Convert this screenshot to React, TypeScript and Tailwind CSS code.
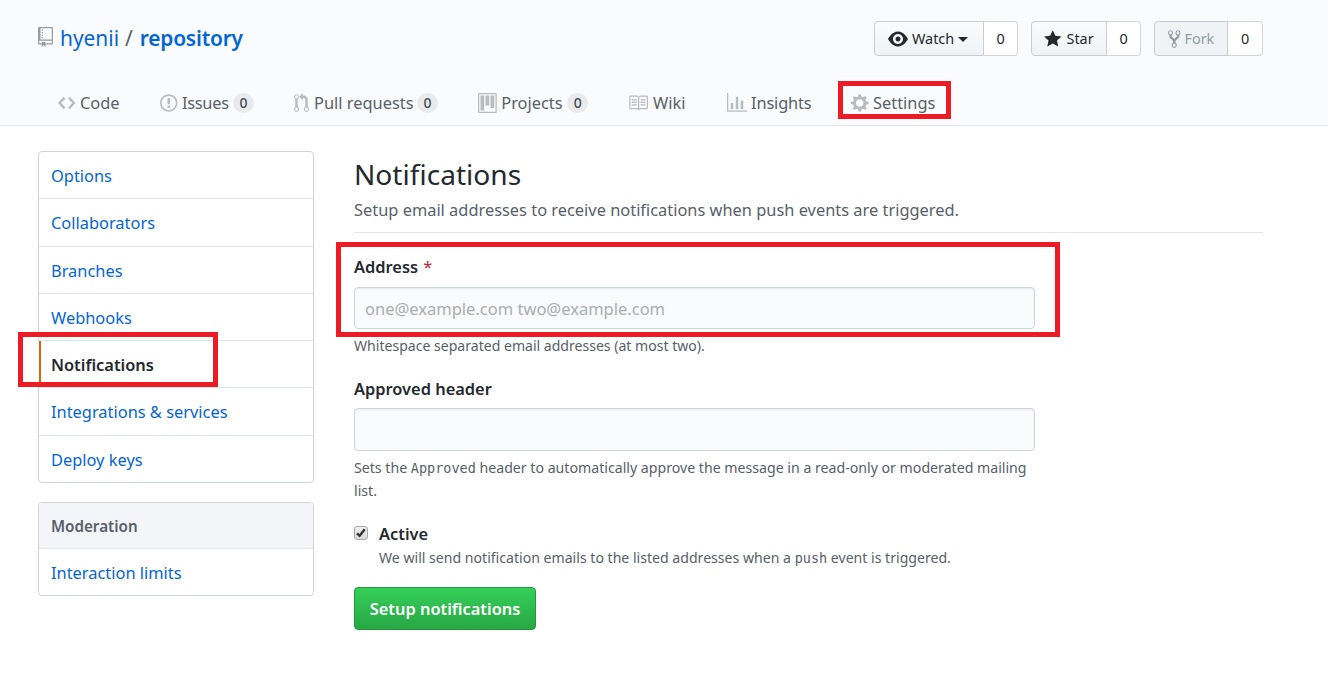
import type { ReactNode } from "react";

const paths = {
  repo: "M4 9H3V8h1v1zm0-3H3v1h1V6zm0-2H3v1h1V4zm0-2H3v1h1V2zm8-1v12c0 .55-.45 1-1 1H6v2l-1.5-1.5L3 16v-2H1c-.55 0-1-.45-1-1V1c0-.55.45-1 1-1h10c.55 0 1 .45 1 1zm-1 10H1v2h2v-1h3v1h5v-2zm0-10H2v9h9V1z",
  eye: "M8.06 2C3 2 0 8 0 8s3 6 8.06 6C13 14 16 8 16 8s-3-6-7.94-6zM8 12c-2.2 0-4-1.78-4-4 0-2.2 1.8-4 4-4 2.22 0 4 1.8 4 4 0 2.22-1.78 4-4 4zm2-4c0 1.11-.89 2-2 2-1.11 0-2-.89-2-2 0-1.11.89-2 2-2 1.11 0 2 .89 2 2z",
  star: "M14 6l-4.9-.64L7 1 4.9 5.36 0 6l3.6 3.26L2.67 14 7 11.67 11.33 14l-.93-4.74z",
  fork: "M8 1a1.993 1.993 0 0 0-1 3.72V6L5 8 3 6V4.72A1.993 1.993 0 0 0 2 1a1.993 1.993 0 0 0-1 3.72V6.5l3 3v1.78A1.993 1.993 0 0 0 5 15a1.993 1.993 0 0 0 1-3.72V9.5l3-3V4.72A1.993 1.993 0 0 0 8 1zM2 4.2C1.34 4.2.8 3.65.8 3c0-.65.55-1.2 1.2-1.2.65 0 1.2.55 1.2 1.2 0 .65-.55 1.2-1.2 1.2zm3 10c-.66 0-1.2-.55-1.2-1.2 0-.65.55-1.2 1.2-1.2.65 0 1.2.55 1.2 1.2 0 .65-.55 1.2-1.2 1.2zm3-10c-.66 0-1.2-.55-1.2-1.2 0-.65.55-1.2 1.2-1.2.65 0 1.2.55 1.2 1.2 0 .65-.55 1.2-1.2 1.2z",
  code: "M9.5 3L8 4.5 11.5 8 8 11.5 9.5 13 14 8 9.5 3zm-5 0L0 8l4.5 5L6 11.5 2.5 8 6 4.5 4.5 3z",
  issue: "M7 2.3c3.14 0 5.7 2.56 5.7 5.7s-2.56 5.7-5.7 5.7A5.71 5.71 0 0 1 1.3 8c0-3.14 2.56-5.7 5.7-5.7zM7 1C3.14 1 0 4.14 0 8s3.14 7 7 7 7-3.14 7-7-3.14-7-7-7zm1 3H6v5h2V4zm0 6H6v2h2v-2z",
  pull: "M11 11.28V5c-.03-.78-.34-1.47-.94-2.06C9.46 2.35 8.78 2.03 8 2H7V0L4 3l3 3V4h1c.27.02.48.11.69.31.21.2.3.42.31.69v6.28A1.993 1.993 0 0 0 10 15a1.993 1.993 0 0 0 1-3.72zm-1 2.92c-.66 0-1.2-.55-1.2-1.2 0-.65.55-1.2 1.2-1.2.65 0 1.2.55 1.2 1.2 0 .65-.55 1.2-1.2 1.2zM4 3c0-1.11-.89-2-2-2a1.993 1.993 0 0 0-1 3.72v6.56A1.993 1.993 0 0 0 2 15a1.993 1.993 0 0 0 1-3.72V4.72c.59-.34 1-.98 1-1.72zm-.8 10c0 .66-.55 1.2-1.2 1.2-.65 0-1.2-.55-1.2-1.2 0-.65.55-1.2 1.2-1.2.65 0 1.2.55 1.2 1.2zM2 4.2C1.34 4.2.8 3.65.8 3c0-.65.55-1.2 1.2-1.2.65 0 1.2.55 1.2 1.2 0 .65-.55 1.2-1.2 1.2z",
  project: "M10 12h3V2h-3v10zm-4-2h3V2H6v8zm-4 4h3V2H2v12zm-1 1h13V1H1v14zM14 0H1a1 1 0 0 0-1 1v14a1 1 0 0 0 1 1h13a1 1 0 0 0 1-1V1a1 1 0 0 0-1-1z",
  book: "M3 5h4v1H3V5zm0 3h4V7H3v1zm0 2h4V9H3v1zm11-5h-4v1h4V5zm0 2h-4v1h4V7zm0 2h-4v1h4V9zm2-6v9c0 .55-.45 1-1 1H9.5l-1 1-1-1H2c-.55 0-1-.45-1-1V3c0-.55.45-1 1-1h5.5l1 1 1-1H15c.55 0 1 .45 1 1zm-8 .5L7.5 3H2v9h6V3.5zm7-.5H9.5l-.5.5V12h6V3z",
  graph: "M16 14v1H0V0h1v14h15zM5 13H3V8h2v5zm4 0H7V3h2v10zm4 0h-2V6h2v7z",
  gear: "M14 8.77v-1.6l-1.94-.64-.45-1.09.88-1.84-1.13-1.13-1.81.91-1.09-.45-.69-1.92h-1.6l-.63 1.94-1.11.45-1.84-.88-1.13 1.13.91 1.81-.45 1.09L0 7.23v1.59l1.94.64.45 1.09-.88 1.84 1.13 1.13 1.81-.91 1.09.45.69 1.92h1.59l.63-1.94 1.11-.45 1.84.88 1.13-1.13-.92-1.81.47-1.09L14 8.75v.02zM7 11c-1.66 0-3-1.34-3-3s1.34-3 3-3 3 1.34 3 3-1.34 3-3 3z",
};

function Icon({ name, w, className = "" }: { name: keyof typeof paths; w: number; className?: string }) {
  return (
    <svg className={`shrink-0 ${className}`} width={w * 1.25} height={20} viewBox={`0 0 ${w} 16`} fill="currentColor" fillRule="evenodd" aria-hidden="true">
      <path d={paths[name]} />
    </svg>
  );
}

function SocialButton({ children, count, width, countWidth, disabled = false }: { children: ReactNode; count: number; width: string; countWidth: string; disabled?: boolean }) {
  return (
    <div className="flex h-[35px] text-[14.4px] text-[#24292e]">
      <button
        disabled={disabled}
        className={`flex items-center rounded-l border border-[#c9cdd1] pl-[13px] ${width} ${disabled ? "bg-[#eff3f6] text-[#959da5]" : "bg-linear-to-b from-[#fafbfc] to-[#eff3f6]"}`}
      >
        {children}
      </button>
      <a className={`flex items-center justify-center rounded-r border border-l-0 border-[#d1d5da] bg-white ${countWidth}`}>{count}</a>
    </div>
  );
}

function Tab({ icon, iconWidth, iconClass = "mr-[4.5px]", label, count, width, labelClass = "" }: { icon: keyof typeof paths; iconWidth: number; iconClass?: string; label: string; count?: number; width: string; labelClass?: string }) {
  return (
    <a className={`flex h-5 items-center ${width}`}>
      <Icon name={icon} w={iconWidth} className={`text-[#b9bcbf] ${iconClass}`} />
      <span className={`shrink-0 whitespace-nowrap ${labelClass}`}>{label}</span>
      {count !== undefined && (
        <span className="flex h-5 w-[21px] shrink-0 items-center justify-center rounded-full bg-[#e8eaec] text-[14px] font-medium text-[#444d56]">{count}</span>
      )}
    </a>
  );
}

const menu = [
  { label: "Options", height: "h-[47px] pt-px" },
  { label: "Collaborators", height: "h-[48px]" },
  { label: "Branches", height: "h-[47px] pt-px" },
  { label: "Webhooks", height: "h-[47px] pt-px" },
  { label: "Notifications", height: "h-[47px] pt-px", active: true },
  { label: "Integrations & services", height: "h-[48px]" },
  { label: "Deploy keys", height: "h-[46px] pt-px" },
];

export default function App() {
  return (
    <div className="h-[673px] w-[1328px] overflow-hidden bg-white font-['Noto_Sans',sans-serif] text-[16.4px] leading-5 text-[#24292e]">
      <header className="h-[126px] border-b border-[#e1e4e8] bg-[#fafbfc] pt-[21px] pl-[38px]">
        <div className="flex h-[35px] justify-between pr-[65px]">
          <h1 className="flex h-[34px] items-center text-[20.9px]">
            <Icon name="repo" w={12} className="-mt-0.5 mr-[7px] text-[#959da5]" />
            <a className="text-[#0366d6]">hyenii</a>
            <span className="mr-[7px] ml-[6px] text-[#586069]">/</span>
            <a className="font-semibold tracking-[-0.2px] text-[#0366d6]">repository</a>
          </h1>
          <div className="flex gap-[13px]">
            <SocialButton count={0} width="w-[110px]" countWidth="w-[34px]">
              <Icon name="eye" w={16} className="mr-1" />
              Watch
              <span className="mt-0.5 ml-1 h-0 w-0 border-x-5 border-t-5 border-x-transparent border-t-[#24292e]" />
            </SocialButton>
            <SocialButton count={0} width="w-[76px]" countWidth="w-[34px]">
              <Icon name="star" w={14} className="-ml-px mr-[5px]" />
              Star
            </SocialButton>
            <SocialButton count={0} width="w-[74px]" countWidth="w-[35px]" disabled>
              <Icon name="fork" w={10} className="mr-1" />
              Fork
            </SocialButton>
          </div>
        </div>
        <nav className="mt-[37px] ml-5 flex text-[#586069]">
          <Tab icon="code" iconWidth={14} label="Code" width="w-[102px]" />
          <Tab icon="issue" iconWidth={14} label="Issues" count={0} width="w-[133px]" labelClass="w-[51px] tracking-[-0.3px]" />
          <Tab icon="pull" iconWidth={12} iconClass="ml-[0.5px] mr-[5.5px]" label="Pull requests" count={0} width="w-[185px]" labelClass="w-[103px]" />
          <Tab icon="project" iconWidth={15} label="Projects" count={0} width="w-[150px]" labelClass="w-[66px]" />
          <Tab icon="book" iconWidth={16} iconClass="mr-[5px]" label="Wiki" width="w-[99px]" />
          <Tab icon="graph" iconWidth={16} iconClass="mr-[4px]" label="Insights" width="w-[124px]" labelClass="tracking-[-0.15px]" />
          <div className="relative">
            <Tab icon="gear" iconWidth={14} label="Settings" width="w-[90px]" />
            <div className="absolute -top-3 -left-[13px] h-[38px] w-[113px] border-5 border-[#ed1c24]" />
          </div>
        </nav>
      </header>

      <div className="flex gap-10 pt-[25px] pl-[38px]">
        <aside className="w-[276px] shrink-0">
          <nav className="rounded-[4px] border border-[#d1d5da]">
            {menu.map((m) => (
              <a key={m.label} className={`relative flex items-center border-b border-[#e1e4e8] pl-3 last:border-b-0 ${m.height} ${m.active ? "font-semibold" : "text-[#0366d6]"}`}>
                {m.active && <span className="absolute top-0 bottom-0 -left-px w-[3px] border-l border-white bg-[#e36209]" />}
                {m.label}
                {m.active && <span className="absolute -top-[9px] -left-[21px] h-[55px] w-[200px] border-5 border-[#ed1c24]" />}
              </a>
            ))}
          </nav>
          <nav className="mt-[19px] rounded-[4px] border border-[#d1d5da]">
            <div className="flex h-[46px] items-center rounded-t-[3px] border-b border-[#e1e4e8] bg-[#f3f5f8] pl-3 text-[15.2px] font-semibold text-[#586069]">Moderation</div>
            <a className="flex h-[46px] items-center pt-0.5 pl-3 text-[#0366d6]">Interaction limits</a>
          </nav>
        </aside>

        <main className="w-[909px]">
          <div className="h-[82px] border-b border-[#e1e4e8]">
            <h2 className="pt-1 text-[28.1px] leading-[38px]">Notifications</h2>
            <p className="mt-[7px] text-[#586069]">Setup email addresses to receive notifications when push events are triggered.</p>
          </div>

          <div className="relative mt-6 w-[681px]">
            <label className="block font-semibold">
              Address <span className="ml-px font-normal text-[#cb2431]">*</span>
            </label>
            <input
              readOnly
              placeholder="one@example.com two@example.com"
              className="mt-[10px] block h-[42px] w-full rounded-[4px] border border-[#d1d5da] bg-[#fafbfc] px-[10px] text-[16.5px] shadow-[inset_0_1px_2px_rgba(27,31,35,0.075)] placeholder:text-[#a9adb2] placeholder:opacity-100"
            />
            <div className="absolute -top-[15px] -left-[18px] h-[95px] w-[724px] border-5 border-[#ed1c24]" />
            <p className="mt-[7px] text-[14.07px] text-[#586069]">Whitespace separated email addresses (at most two).</p>
          </div>

          <div className="mt-[23px] w-[681px]">
            <label className="block font-semibold">Approved header</label>
            <input readOnly className="mt-[9px] block h-[43px] w-full rounded-[4px] border border-[#d1d5da] bg-[#fafbfc] px-[10px] shadow-[inset_0_1px_2px_rgba(27,31,35,0.075)]" />
            <p className="mt-[5px] text-[14.15px] leading-[23px] text-[#586069]">
              Sets the <code className="font-['DejaVu_Sans_Mono',monospace] text-[13.5px] leading-none">Approved</code> header to automatically approve the message in a read-only or moderated mailing list.
            </p>
          </div>

          <div className="mt-[22px] flex">
            <span className="mt-0.5 flex h-[14px] w-[14px] items-center justify-center rounded-[3px] border border-[#a9a9a9] bg-linear-to-b from-[#f0f0f0] to-[#dcdcdc]">
              <svg width="12" height="12" viewBox="0 0 12 12" fill="none" stroke="#333" strokeWidth="2.4" aria-hidden="true">
                <path d="M2 6.3 4.6 8.8 9.8 2.2" />
              </svg>
            </span>
            <div className="ml-[11px]">
              <label className="block font-semibold">Active</label>
              <p className="mt-1 text-[14.1px] text-[#586069]">
                We will send notification emails to the listed addresses when a <code className="font-['DejaVu_Sans_Mono',monospace] text-[13.5px] leading-none">push</code> event is triggered.
              </p>
            </div>
          </div>

          <button className="mt-[19px] flex h-[43px] w-[182px] items-center justify-center rounded-[4px] border border-[#269542] bg-linear-to-b from-[#34d058] to-[#28a745] pt-px font-semibold whitespace-nowrap text-white">Setup notifications</button>
        </main>
      </div>
    </div>
  );
}
